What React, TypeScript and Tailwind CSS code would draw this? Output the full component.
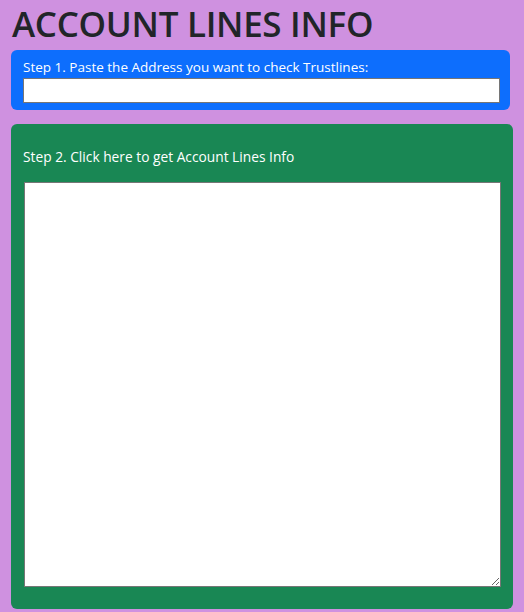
export default function App() {
  return (
    <div className="min-h-[612px] w-[524px] bg-[#cf91e0] px-[11px] pt-[1px] font-['Open_Sans',sans-serif]">
      <h1 className="pl-px text-[35px] leading-[46px] font-semibold tracking-[-0.3px] text-[#212529]">
        ACCOUNT LINES INFO
      </h1>

      {/* Step 1 */}
      <div className="mt-[3px] w-[499px] rounded-md bg-[#0d6efd] px-3 pt-[7px] pb-[7px]">
        <label className="block text-[13.5px] leading-[21px] text-white">
          Step 1. Paste the Address you want to check Trustlines:
        </label>
        <input
          type="text"
          className="block h-[25px] w-[477px] border border-[#767676] bg-white outline-none"
        />
      </div>

      {/* Step 2 */}
      <div className="mt-[14px] flex h-[485px] w-[502px] flex-col rounded-md bg-[#198754] pl-3 pr-3 pt-[23px] pb-[22px]">
        <label className="block text-[13.75px] leading-[20px] text-white">
          Step 2. Click here to get Account Lines Info
        </label>
        <textarea className="mt-[15px] ml-px block h-[405px] w-[477px] resize border border-[#767676] bg-white outline-none" />
      </div>
    </div>
  );
}
